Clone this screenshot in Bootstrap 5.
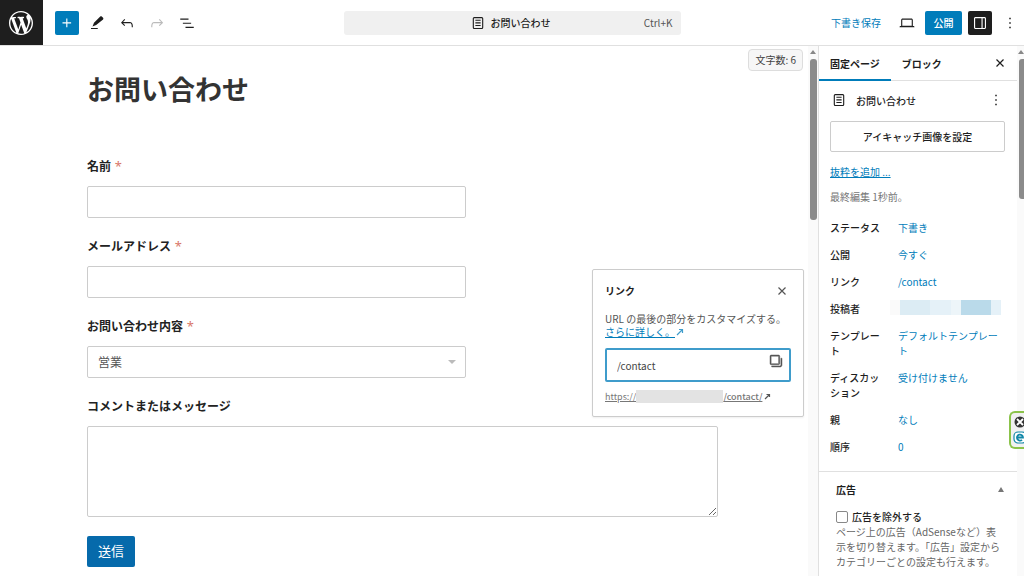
<!DOCTYPE html>
<html lang="ja">
<head>
<meta charset="utf-8">
<meta name="viewport" content="width=device-width, initial-scale=1">
<title>お問い合わせ</title>
<link href="https://cdn.jsdelivr.net/npm/bootstrap@5.3.0/dist/css/bootstrap.min.css" rel="stylesheet">
<style>
:root { --wp-blue: #007cba; --wp-ink: #1e1e1e; --wp-line: #e0e0e0; }
body { font-family: "Noto Sans CJK JP", "Noto Sans", sans-serif; font-size: 10px; line-height: 15px; color: var(--wp-ink); background: #fff; }
a { color: var(--wp-blue); }
svg { display: block; flex: none; fill: currentColor; }
svg.line-ico { fill: none; stroke: currentColor; stroke-width: 1.2; }
.ico { width: 18px; height: 18px; }
.plain-btn { border: 0; background: none; padding: 0; color: inherit; display: flex; align-items: center; justify-content: center; }
.topbar { height: 46px; border-bottom: 1px solid var(--wp-line); }
.topbar .side { flex: 1 1 0; }
.wp-home { width: 43px; height: 45px; background: var(--wp-ink); color: #fff; display: flex; align-items: center; justify-content: center; padding-right: 2px; }
.wp-home:hover { color: #fff; }
.tool { width: 24px; height: 24px; border-radius: 2px; }
.tool-blue { background: var(--wp-blue); color: #fff; }
.tool-dark { background: var(--wp-ink); color: #fff; }
.publish { width: 37px; height: 24px; border-radius: 2px; font-weight: 500; }
.doc-bar { width: 33%; height: 24px; background: #f0f0f0; border-radius: 3px; margin-left: 3px; padding-right: 6px; }
.doc-bar .keys { right: 9px; color: #555; font-weight: 400; }
.workspace { height: calc(100vh - 46px); }
.editor { padding: 25px 90px 0 87px; }
.editor h1 { font-size: 27px; line-height: 36px; font-weight: 700; color: #333; margin: 0 0 50px; }
.field { margin-bottom: 19px; }
.field label { font-size: 12px; line-height: 18px; font-weight: 700; margin-bottom: 11px; color: #222; display: block; }
.field sup { font: 400 13px/12px "Noto Sans", sans-serif; top: 0; vertical-align: baseline; color: #d9776a; margin-left: 1px; }
.field .form-control, .field .form-select { width: 60%; height: 32px; border: 1px solid #ccc; border-radius: 2px; font-size: 12px; line-height: 18px; padding: 5px 10px; color: #555; }
.field .form-select { background: #fff url("data:image/svg+xml,%3Csvg xmlns='http://www.w3.org/2000/svg' viewBox='0 0 8 4'%3E%3Cpath d='M0 0h8L4 4z' fill='%23bbb'/%3E%3C/svg%3E") no-repeat right 9px center / 8px 4px; }
.field textarea.form-control { width: 100%; height: 91px; }
.send { background: #066aab; color: #fff; border: 0; border-radius: 2px; font-size: 13px; line-height: 19px; padding: 5px 11px 7px; }
.editor-col { padding-right: 10px; }
.count { top: 3px; right: 15px; background: #f6f6f6; border: 1px solid #ddd; border-radius: 4px; padding: 2px 6px 3px; color: #444; }
.bar { width: 10px; top: 0; bottom: 0; right: 0; background: #fafafa; padding: 4px 2px; }
.bar::before { content: ""; display: block; margin: 0 auto 5px; width: 0; border: 3px solid transparent; border-top: 0; border-bottom: 4px solid #888; }
.bar::after { content: ""; display: block; height: 161px; border-radius: 3px; background: #8b8b8b; width: 7px; }
.bar-side { width: 7px; padding: 4px 0; }
.bar-side::after { height: 140px; margin-left: 2px; }
.link-pop { top: 223px; right: 14px; width: 212px; border: 1px solid #ccc; border-radius: 2px; background: #fff; padding: 12px; box-shadow: 0 1px 2px #0001; color: #555; line-height: 13px; }
.link-pop h2 { font-size: 10px; line-height: 18px; font-weight: 700; margin: 0; color: var(--wp-ink); }
.link-pop .ext { width: 10px; height: 10px; }
.slug { border: 2px solid #3f9ccb; border-radius: 2px; height: 34px; margin-top: 10px; }
.slug input { border: 0; outline: 0; font-size: 10px; min-width: 0; padding: 0 0 0 10px; color: #444; }
.permalink { color: #777; font-size: 9px; line-height: 14px; }
.permalink:hover { color: #555; }
.masked { display: inline-block; width: 87px; height: 13px; background: #e3e3e3; }
.inspector { width: 206px; border-left: 1px solid var(--wp-line); padding-right: 7px; }
.tab-row { height: 35px; border-bottom: 1px solid var(--wp-line); }
.tab-row .tab { padding: 0 11px; height: 35px; }
.tab-row .tab.on { border-bottom: 2px solid var(--wp-blue); padding-top: 2px; }
.panel-main { padding: 10px 12px 17px 11px; border-bottom: 1px solid var(--wp-line); }
.thumb-btn { border: 1px solid #ccc; border-radius: 2px; background: #fff; height: 31px; font-weight: 500; color: var(--wp-ink); }
.props { display: grid; grid-template-columns: 56px 1fr; column-gap: 12px; row-gap: 12px; margin: 0; }
.props dt { font-weight: 500; }
.props dd { margin: 0; color: var(--wp-blue); }
.props a { text-decoration: none; }
.author { display: flex; height: 15px; margin: -1px 4px 1px -8px; }
.author i { flex: 3; background: #e5f1f8; }
.ads { padding: 10px 12px 0 17px; }
.ads h2 { font-size: 10px; line-height: 15px; font-weight: 700; margin: 0; }
.ads input { width: 12px; height: 12px; border: 1px solid #888; border-radius: 2px; margin: 0; appearance: none; }
.ads p { color: #666; margin: 0 -8px 0 0; }
.chip { right: 0; top: 411px; width: 15px; height: 38px; border: 2px solid #8bc34a; border-right: 0; border-radius: 6px 0 0 6px; background: #f1f1f1; overflow: hidden; padding: 3px 0 0 1px; }
</style>
</head>
<body class="overflow-hidden position-relative">
<header class="topbar d-flex align-items-center">
  <div class="side d-flex align-items-center">
    <a class="wp-home" href="#" aria-label="WordPress"><svg width="24" height="24" viewBox="0 0 20 20"><path d="M20 10c0-5.51-4.49-10-10-10C4.48 0 0 4.49 0 10c0 5.52 4.48 10 10 10 5.51 0 10-4.48 10-10zM7.78 15.37L4.37 6.22c.55-.02 1.17-.08 1.17-.08.5-.06.44-1.13-.06-1.11 0 0-1.45.11-2.37.11-.18 0-.37 0-.58-.01C4.12 2.69 6.87 1.11 10 1.11c2.33 0 4.45.87 6.05 2.34-.68-.11-1.65.39-1.65 1.58 0 .74.45 1.36.9 2.1.35.61.55 1.36.55 2.46 0 1.49-1.4 5-1.4 5l-3.03-8.37c.54-.02.82-.17.82-.17.5-.05.44-1.25-.06-1.22 0 0-1.44.12-2.38.12-.87 0-2.33-.12-2.33-.12-.5-.03-.56 1.2-.06 1.22l.92.08 1.26 3.41zM17.41 10c.24-.64.74-1.87.43-4.25.7 1.29 1.05 2.71 1.05 4.25 0 3.29-1.73 6.24-4.4 7.78.97-2.59 1.94-5.2 2.92-7.78zM6.1 18.09C3.12 16.65 1.11 13.53 1.11 10c0-1.3.23-2.48.72-3.59C3.25 10.3 4.67 14.2 6.1 18.09zm4.03-6.63l2.58 6.98c-.86.29-1.76.45-2.71.45-.79 0-1.57-.11-2.29-.33.81-2.38 1.62-4.74 2.42-7.1z"/></svg></a>
    <div class="d-flex" style="gap:6px;padding-left:12px">
      <button class="plain-btn tool tool-blue" aria-label="追加"><svg class="ico" viewBox="0 0 24 24"><path d="M11 12.500V17.500h1.500V12.500H17.500V11H12.500V6H11V11H6V12.500z"/></svg></button>
      <button class="plain-btn tool" aria-label="ツール"><svg class="ico" viewBox="0 0 24 24"><path d="M20.100 5.100 18.400 3.400c-.6-.6-1.500-.6-2.100 0L8 11.700 6 16.600l4.900-2L20.100 7.200c.6-.6.6-1.500 0-2.100zM4 18.500h9V20H4z"/></svg></button>
      <button class="plain-btn tool" aria-label="元に戻す"><svg class="ico" viewBox="0 0 24 24"><path d="M18.300 11.700c-.6-.6-1.400-.9-2.300-.9H6.700l2.900-3.300-1.100-1-4.500 5L8.500 16l1-1-2.700-2.700H16c.5 0 .9.2 1.300.5 1 1 1 3.400 1 4.500v.3h1.500v-.2c0-1.500 0-4.300-1.500-5.700z"/></svg></button>
      <button class="plain-btn tool" aria-label="やり直す" style="color:#bbb"><svg class="ico" viewBox="0 0 24 24"><path d="M15.600 6.500l-1.100 1 2.900 3.300H8c-.9 0-1.700.3-2.300.9-1.400 1.500-1.400 4.200-1.400 5.600v.2h1.500v-.3c0-1.100 0-3.500 1-4.500.3-.3.7-.5 1.300-.5h9.200L14.500 15l1.100 1.100 4.600-4.600-4.600-5z"/></svg></button>
      <button class="plain-btn tool" aria-label="リスト表示"><svg class="ico" viewBox="0 0 24 24"><path d="M3 6h11v1.500H3V6Zm3.500 5.500h11V13h-11v-1.500ZM21 17H10v1.500h11V17Z"/></svg></button>
    </div>
  </div>
  <button class="doc-bar plain-btn position-relative gap-1 fw-medium">
    <svg class="ico" viewBox="0 0 24 24"><path d="M15.500 7.500h-7V9h7V7.500Zm-7 3.500h7v1.500h-7V11Zm7 3.500h-7V16h7v-1.500Z"/><path fill-rule="evenodd" d="M17 4H7a2 2 0 0 0-2 2v12a2 2 0 0 0 2 2h10a2 2 0 0 0 2-2V6a2 2 0 0 0-2-2ZM7 5.500h10a.5.5 0 0 1 .5.5v12a.5.5 0 0 1-.5.5H7a.5.5 0 0 1-.5-.5V6a.5.5 0 0 1 .5-.5Z"/></svg>
    <span>お問い合わせ</span><span class="keys position-absolute">Ctrl+K</span>
  </button>
  <div class="side d-flex align-items-center justify-content-end" style="gap:6px;padding-right:2px">
    <button class="plain-btn me-2" style="color:var(--wp-blue)">下書き保存</button>
    <button class="plain-btn tool" aria-label="表示"><svg class="ico" viewBox="0 0 24 24"><path d="M20.500 16h-.7V8c0-1.100-.9-2-2-2H6.200c-1.100 0-2 .9-2 2v8h-.7c-.8 0-1.500.7-1.500 1.500h20c0-.8-.7-1.500-1.500-1.500zM5.700 8c0-.3.2-.5.5-.5h11.600c.3 0 .5.2.5.5v7.600H5.700V8z"/></svg></button>
    <button class="plain-btn publish tool-blue">公開</button>
    <button class="plain-btn tool tool-dark" aria-label="設定"><svg class="ico" viewBox="0 0 24 24"><path d="M18 4H6c-1.100 0-2 .9-2 2v12c0 1.100.9 2 2 2h12c1.100 0 2-.9 2-2V6c0-1.100-.9-2-2-2zm-4 14.500H6c-.3 0-.5-.2-.5-.5V6c0-.3.2-.5.5-.5h8v13zm4.500-.5c0 .3-.2.5-.5.5h-2.500v-13H18c.3 0 .5.2.5.5v12z"/></svg></button>
    <button class="plain-btn tool" aria-label="オプション"><svg class="ico" viewBox="0 0 24 24"><path d="M11 5h2v2h-2zM11 11h2v2h-2zM11 17h2v2h-2z"/></svg></button>
  </div>
</header>

<div class="workspace d-flex">
  <main class="editor-col flex-grow-1 position-relative overflow-hidden">
    <form class="editor" onsubmit="return false">
      <h1>お問い合わせ</h1>
      <div class="field"><label for="f-name">名前 <sup>*</sup></label><input id="f-name" class="form-control" type="text"></div>
      <div class="field"><label for="f-mail">メールアドレス <sup>*</sup></label><input id="f-mail" class="form-control" type="email"></div>
      <div class="field"><label for="f-kind">お問い合わせ内容 <sup>*</sup></label><select id="f-kind" class="form-select"><option>営業</option></select></div>
      <div class="field"><label for="f-msg">コメントまたはメッセージ</label><textarea id="f-msg" class="form-control"></textarea></div>
      <button class="send" type="submit">送信</button>
    </form>
    <div class="count position-absolute">文字数: 6</div>
    <section class="link-pop position-absolute">
      <div class="d-flex justify-content-between align-items-center"><h2>リンク</h2>
        <button class="plain-btn" aria-label="閉じる"><svg class="ico line-ico" viewBox="0 0 18 18"><path d="M5.500 5.500l7 7m0-7l-7 7"/></svg></button></div>
      <div class="mt-2 pt-1 text-nowrap">URL の最後の部分をカスタマイズする。</div>
      <div class="d-flex align-items-center"><a href="#">さらに詳しく。</a><svg class="ext line-ico" style="color:#3f9ccb" viewBox="0 0 10 10"><path d="M2 8l5-5M4 2.500h3.500V6"/></svg></div>
      <div class="slug d-flex align-items-center pe-1">
        <input class="flex-grow-1" type="text" value="/contact" aria-label="リンク">
        <button class="plain-btn mb-2" aria-label="コピー"><svg class="ico" viewBox="0 0 24 24" stroke="currentColor" stroke-width=".6"><path fill-rule="evenodd" d="M5.625 5.500h9.750c.069 0 .125.056.125.125v9.750a.125.125 0 0 1-.125.125h-9.750a.125.125 0 0 1-.125-.125v-9.750c0-.069.056-.125.125-.125ZM4 5.625C4 4.728 4.728 4 5.625 4h9.750C16.273 4 17 4.728 17 5.625v9.750c0 .898-.727 1.625-1.625 1.625h-9.750A1.625 1.625 0 0 1 4 15.375v-9.750Zm14.500 11.656v-9H20v9C20 18.800 18.770 20 17.251 20H6.250v-1.500h11.001c.69 0 1.249-.528 1.249-1.219Z"/></svg></button>
      </div>
      <div class="d-flex align-items-center mt-1 pt-1"><a class="permalink d-flex" href="#"><span>https://</span><span class="masked"></span><span class="fw-medium">/contact/</span></a><svg class="ext line-ico" viewBox="0 0 10 10"><path d="M3 7l4-4M4.500 2.500h3V5"/></svg></div>
    </section>
    <div class="bar position-absolute"></div>
  </main>

  <aside class="inspector flex-shrink-0 position-relative">
    <div class="tab-row d-flex align-items-center">
      <button class="plain-btn tab on fw-bold">固定ページ</button>
      <button class="plain-btn tab fw-bold">ブロック</button>
      <button class="plain-btn ms-auto me-2" aria-label="閉じる"><svg class="ico line-ico" viewBox="0 0 18 18"><path d="M5.500 5.500l7 7m0-7l-7 7"/></svg></button>
    </div>
    <div class="panel-main">
      <div class="d-flex align-items-center fw-medium">
        <svg class="ico" viewBox="0 0 24 24"><path d="M15.500 7.500h-7V9h7V7.500Zm-7 3.500h7v1.500h-7V11Zm7 3.500h-7V16h7v-1.500Z"/><path fill-rule="evenodd" d="M17 4H7a2 2 0 0 0-2 2v12a2 2 0 0 0 2 2h10a2 2 0 0 0 2-2V6a2 2 0 0 0-2-2ZM7 5.500h10a.5.5 0 0 1 .5.5v12a.5.5 0 0 1-.5.5H7a.5.5 0 0 1-.5-.5V6a.5.5 0 0 1 .5-.5Z"/></svg>
        <span class="ms-2">お問い合わせ</span>
        <button class="plain-btn ms-auto" aria-label="操作"><svg class="ico" viewBox="0 0 24 24"><path d="M11 5h2v2h-2zM11 11h2v2h-2zM11 17h2v2h-2z"/></svg></button>
      </div>
      <button class="thumb-btn w-100 p-0" style="margin:12px 0">アイキャッチ画像を設定</button>
      <a href="#">抜粋を追加 ...</a>
      <div style="color:#757575;margin:10px 0 16px">最終編集 1秒前。</div>
      <dl class="props">
        <dt>ステータス</dt><dd><a href="#">下書き</a></dd>
        <dt>公開</dt><dd><a href="#">今すぐ</a></dd>
        <dt>リンク</dt><dd><a href="#">/contact</a></dd>
        <dt>投稿者</dt><dd><span class="author"><i style="flex:1;background:#fafafa"></i><i style="background:#dcecf4"></i><i style="flex:2"></i><i style="flex:1;background:#edf5f9"></i><i style="background:#badaea"></i><i style="flex:1"></i></span></dd>
        <dt>テンプレート</dt><dd><a href="#">デフォルトテンプレート</a></dd>
        <dt>ディスカッション</dt><dd><a href="#">受け付けません</a></dd>
        <dt>親</dt><dd><a href="#">なし</a></dd>
        <dt>順序</dt><dd><a href="#">0</a></dd>
      </dl>
    </div>
    <div class="ads">
      <div class="d-flex align-items-center justify-content-between"><h2>広告</h2><svg width="8" height="6" viewBox="0 0 8 6" style="color:#777"><path d="M4 0l3 5H1z"/></svg></div>
      <div class="d-flex align-items-center gap-1 mt-2 pt-1"><input id="no-ads" type="checkbox"><label for="no-ads" class="fw-medium">広告を除外する</label></div>
      <p class="text-nowrap">ページ上の広告（AdSenseなど）表<br>示を切り替えます。「広告」設定から<br>カテゴリーごとの設定も行えます。</p>
    </div>
    <div class="bar bar-side position-absolute"></div>
  </aside>
</div>
<div class="chip position-absolute"><svg width="15" height="30" viewBox="0 0 15 30"><circle cx="8" cy="6" r="5.500" fill="#333"/><path d="M5 3l6 6m0-6l-6 6" stroke="#fff" stroke-width="1.800"/><rect x="2" y="16" width="12" height="11" rx="4" fill="#fff" stroke="#1287a8" stroke-width="1.200"/><path d="M5 21.500h6a3 3 0 1 0-1 2.300" fill="none" stroke="#1287a8" stroke-width="1.800"/></svg></div>
<script src="https://cdn.jsdelivr.net/npm/bootstrap@5.3.0/dist/js/bootstrap.bundle.min.js"></script>
</body>
</html>
